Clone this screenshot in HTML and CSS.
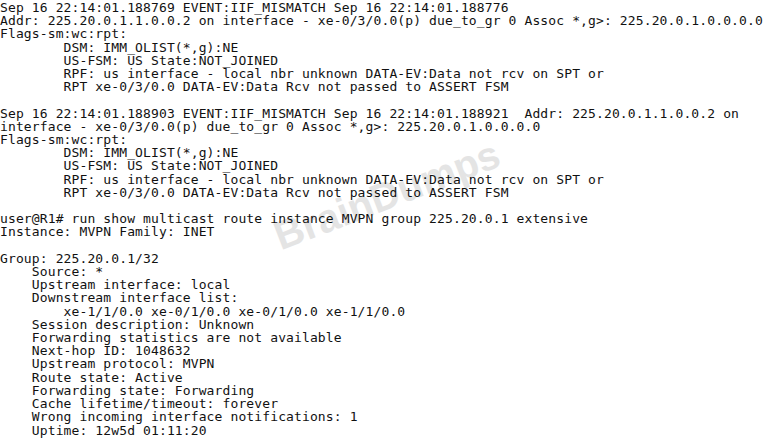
FILE: index.html
```html
<!DOCTYPE html>
<html>
<head>
<meta charset="utf-8">
<link rel="stylesheet" href="styles.css">
</head>
<body>
<div class="page">
<pre class="log">Sep 16 22:14:01.188769 EVENT:IIF_MISMATCH Sep 16 22:14:01.188776
Addr: 225.20.0.1.1.0.0.2 on interface - xe-0/3/0.0(p) due_to_gr 0 Assoc *,g>: 225.20.0.1.0.0.0.0
Flags-sm:wc:rpt:
        DSM: IMM_OLIST(*,g):NE
        US-FSM: US State:NOT_JOINED
        RPF: us interface - local nbr unknown DATA-EV:Data not rcv on SPT or
        RPT xe-0/3/0.0 DATA-EV:Data Rcv not passed to ASSERT FSM

Sep 16 22:14:01.188903 EVENT:IIF_MISMATCH Sep 16 22:14:01.188921  Addr: 225.20.0.1.1.0.0.2 on
interface - xe-0/3/0.0(p) due_to_gr 0 Assoc *,g>: 225.20.0.1.0.0.0.0
Flags-sm:wc:rpt:
        DSM: IMM_OLIST(*,g):NE
        US-FSM: US State:NOT_JOINED
        RPF: us interface - local nbr unknown DATA-EV:Data not rcv on SPT or
        RPT xe-0/3/0.0 DATA-EV:Data Rcv not passed to ASSERT FSM

user@R1# run show multicast route instance MVPN group 225.20.0.1 extensive
Instance: MVPN Family: INET

Group: 225.20.0.1/32
    Source: *
    Upstream interface: local
    Downstream interface list:
        xe-1/1/0.0 xe-0/1/0.0 xe-0/1/0.0 xe-1/1/0.0
    Session description: Unknown
    Forwarding statistics are not available
    Next-hop ID: 1048632
    Upstream protocol: MVPN
    Route state: Active
    Forwarding state: Forwarding
    Cache lifetime/timeout: forever
    Wrong incoming interface notifications: 1
    Uptime: 12w5d 01:11:20</pre>
<div class="watermark">BrainDumps</div>
</div>
</body>
</html>
```
FILE: styles.css
```css
html, body {
  margin: 0;
  padding: 0;
  background: #ffffff;
}
.page {
  position: relative;
  width: 777px;
  height: 441px;
  overflow: hidden;
}
.log {
  margin: 0;
  padding: 1px 0 0 0;
  font-family: "DejaVu Sans Mono", "Liberation Mono", monospace;
  font-size: 13px;
  letter-spacing: 0.12px;
  line-height: 13.2px;
  color: #111111;
  position: relative;
  z-index: 1;
}
.watermark {
  position: absolute;
  left: 284px;
  top: 214px;
  font-family: "Liberation Sans", Arial, sans-serif;
  font-weight: bold;
  font-size: 40px;
  color: #e4e4e4;
  transform: rotate(-21deg);
  transform-origin: left bottom;
  z-index: 0;
  white-space: nowrap;
}
```
